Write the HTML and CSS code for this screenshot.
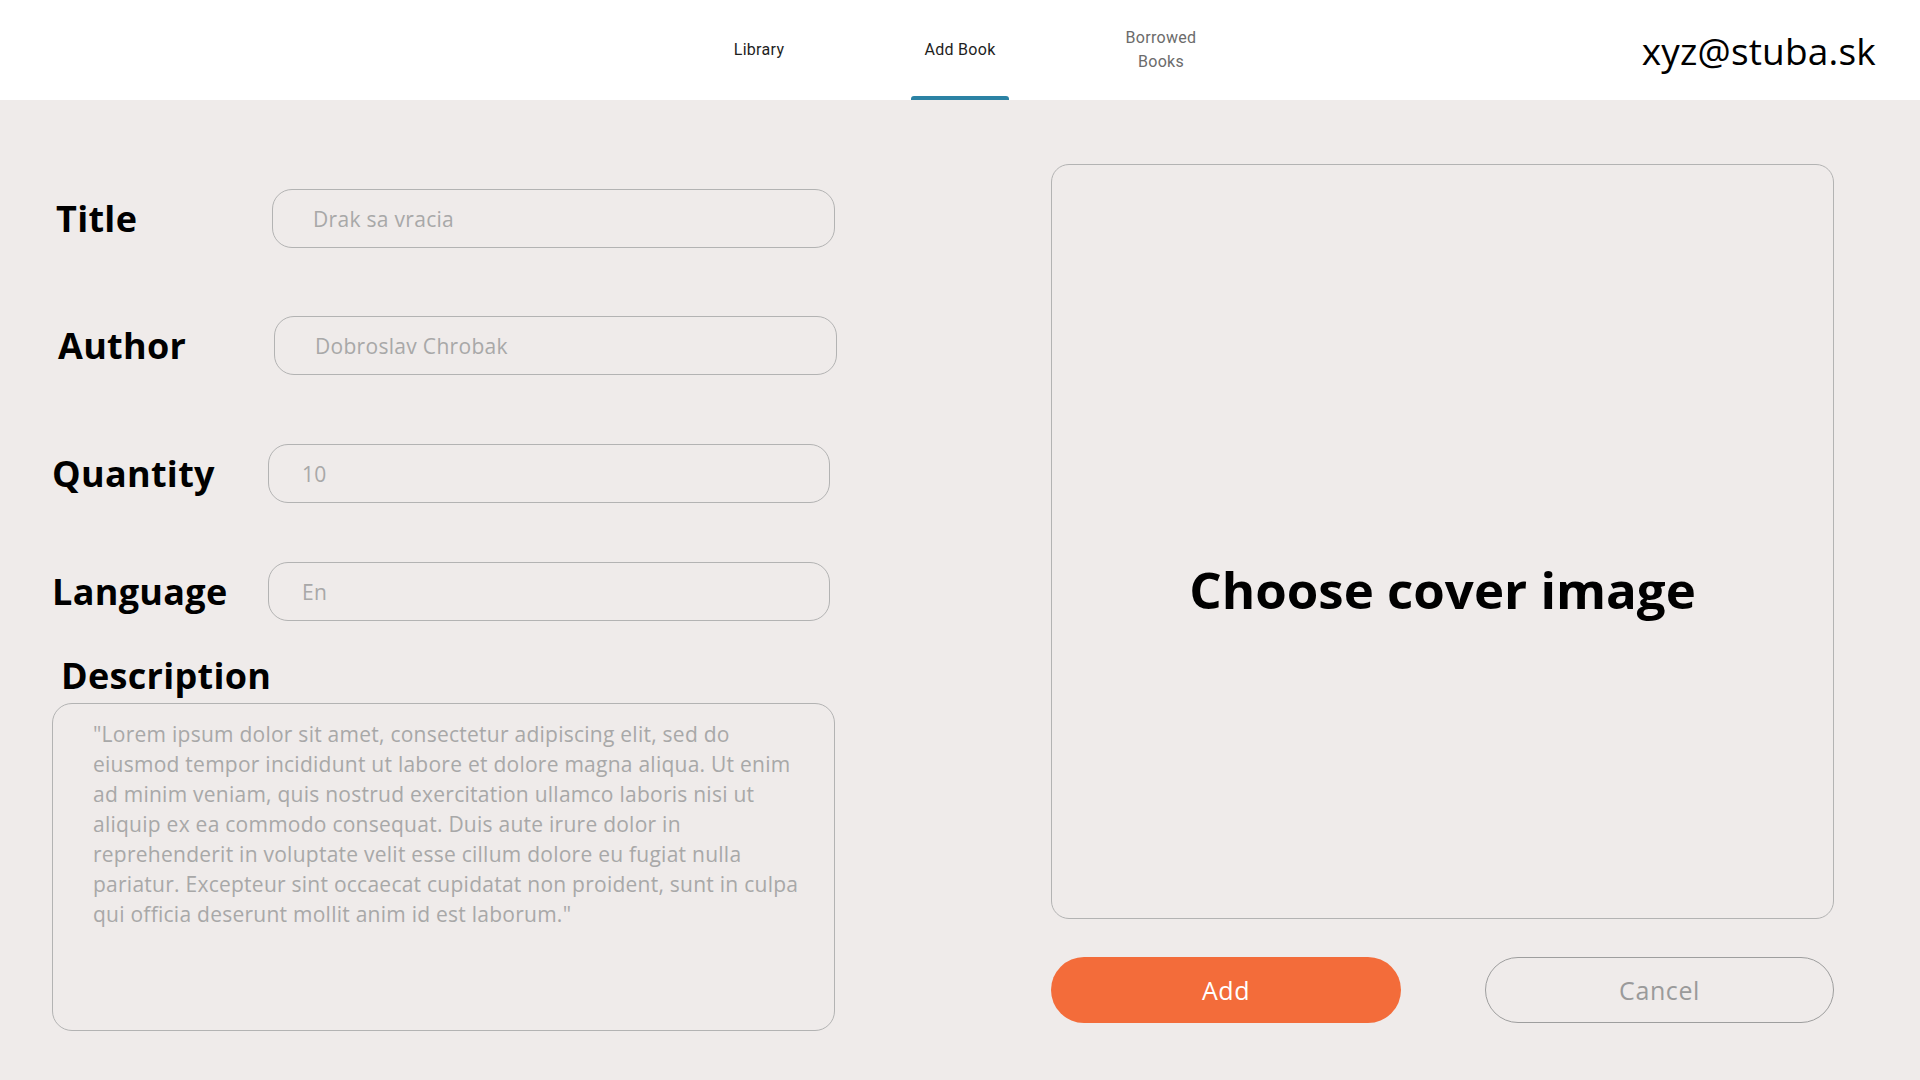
FILE: index.html
```html
<!DOCTYPE html>
<html lang="en">
<head>
<meta charset="utf-8">
<title>Add Book</title>
<link rel="stylesheet" href="styles.css">
</head>
<body>
<header class="topbar">
  <div class="topbar-spacer"></div>
  <nav class="tabs">
    <a class="tab">Library</a>
    <a class="tab tab--active">Add Book</a>
    <a class="tab tab--muted">Borrowed Books</a>
  </nav>
  <div class="user">xyz@stuba.sk</div>
</header>
<main class="content">
  <section class="form">
    <div class="field field--title">
      <label class="field-label">Title</label>
      <div class="field-input">Drak sa vracia</div>
    </div>
    <div class="field field--author">
      <label class="field-label">Author</label>
      <div class="field-input">Dobroslav Chrobak</div>
    </div>
    <div class="field field--quantity">
      <label class="field-label">Quantity</label>
      <div class="field-input">10</div>
    </div>
    <div class="field field--language">
      <label class="field-label">Language</label>
      <div class="field-input">En</div>
    </div>
    <label class="desc-label">Description</label>
    <div class="desc-box">"Lorem ipsum dolor sit amet, consectetur adipiscing elit, sed do<br>eiusmod tempor incididunt ut labore et dolore magna aliqua. Ut enim<br>ad minim veniam, quis nostrud exercitation ullamco laboris nisi ut<br>aliquip ex ea commodo consequat. Duis aute irure dolor in<br>reprehenderit in voluptate velit esse cillum dolore eu fugiat nulla<br>pariatur. Excepteur sint occaecat cupidatat non proident, sunt in culpa<br>qui officia deserunt mollit anim id est laborum."</div>
  </section>
  <section class="side">
    <div class="cover">Choose cover image</div>
    <div class="actions">
      <button class="btn btn--primary">Add</button>
      <button class="btn btn--ghost">Cancel</button>
    </div>
  </section>
</main>
</body>
</html>
```
FILE: styles.css
```css
* { box-sizing: border-box; }
html, body { margin: 0; padding: 0; }
body {
  width: 1920px;
  height: 1080px;
  background: #efebea;
  font-family: "Open Sans", "Noto Sans", sans-serif;
  color: #000;
  overflow: hidden;
}

.topbar {
  height: 100px;
  background: #ffffff;
  display: grid;
  grid-template-columns: 1fr auto 1fr;
  align-items: center;
}
.tabs {
  display: flex;
  gap: 103px;
  height: 100px;
}
.tab {
  position: relative;
  width: 98px;
  height: 100px;
  display: flex;
  align-items: center;
  justify-content: center;
  text-align: center;
  font-family: Roboto, "Noto Sans", sans-serif;
  font-size: 16px;
  line-height: 24px;
  letter-spacing: 0.3px;
  color: #1e1e1e;
}
.tab--muted { color: #6b6b6b; }
.tab--active::after {
  content: "";
  position: absolute;
  left: 0;
  right: 0;
  bottom: 0;
  height: 4px;
  background: #2b82a4;
  border-radius: 3px 3px 0 0;
}
.user {
  justify-self: end;
  padding-right: 44px;
  font-size: 37px;
  color: #000;
  letter-spacing: 0.2px;
}

.content {
  display: grid;
  grid-template-columns: 786px 783px;
  column-gap: 213px;
  padding-left: 52px;
  align-items: start;
}

.form {
  padding-top: 89px;
  display: flex;
  flex-direction: column;
}
.field {
  display: flex;
  align-items: center;
  height: 59px;
}
.field--author { margin-top: 68px; padding-left: 6px; }
.field--title { padding-left: 4px; }
.field--quantity { margin-top: 69px; }
.field--language { margin-top: 59px; }
.field-label {
  width: 216px;
  font-weight: 700;
  font-size: 36px;
  line-height: 44px;
  letter-spacing: 0.3px;
}
.field-input {
  width: 563px;
  height: 59px;
  border: 1px solid #b3b3b3;
  border-radius: 20px;
  padding-left: 40px;
  display: flex;
  align-items: center;
  font-size: 21px;
  letter-spacing: 0.3px;
  color: #a8a8a8;
}
.field--quantity .field-input,
.field--language .field-input { width: 562px; padding-left: 33px; }

.desc-label {
  margin-top: 33px;
  margin-left: 9px;
  font-weight: 700;
  font-size: 36px;
  line-height: 44px;
  letter-spacing: 0.3px;
}
.desc-box {
  margin-top: 5px;
  width: 783px;
  height: 328px;
  border: 1px solid #b3b3b3;
  border-radius: 20px;
  padding: 15px 10px 0 40px;
  font-size: 21px;
  line-height: 30px;
  letter-spacing: 0.25px;
  white-space: nowrap;
  color: #a8a8a8;
}

.side {
  padding-top: 64px;
  display: flex;
  flex-direction: column;
}
.cover {
  height: 755px;
  border: 1px solid #b3b3b3;
  border-radius: 18px;
  display: flex;
  align-items: center;
  justify-content: center;
  padding-top: 95px;
  font-weight: 700;
  font-size: 51px;
  color: #000;
}
.actions {
  margin-top: 38px;
  display: flex;
  justify-content: space-between;
}
.btn {
  width: 350px;
  height: 66px;
  border-radius: 33px;
  font-family: "Open Sans", "Noto Sans", sans-serif;
  font-size: 25px;
  font-weight: 500;
  letter-spacing: 0.6px;
  cursor: pointer;
}
.btn--primary {
  background: #f36c3a;
  border: none;
  color: #ffffff;
}
.btn--ghost {
  width: 349px;
  background: transparent;
  border: 1px solid #9e9e9e;
  color: #9a9a9a;
}
```
